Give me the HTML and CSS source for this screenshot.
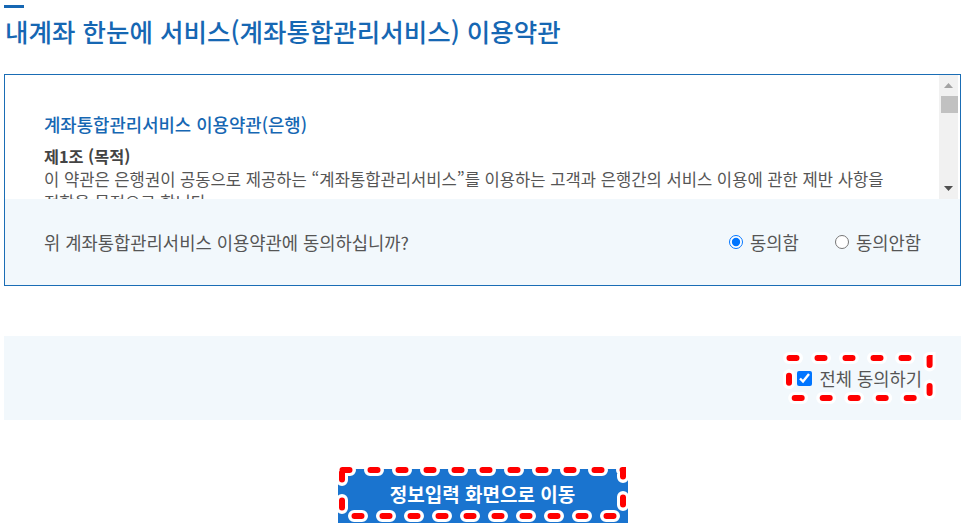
FILE: index.html
```html
<!DOCTYPE html>
<html lang="ko">
<head>
  <meta charset="UTF-8" />
  <meta name="viewport" content="width=device-width, initial-scale=1.0"/>
  <title>이용약관</title>
  <link rel="stylesheet" href="styles.css">
</head>
<body>

  <h1 class="page-title">내계좌 한눈에 서비스(계좌통합관리서비스) 이용약관</h1>

  <div class="terms-box">
    <div class="terms-view">
      <div class="terms-scroll">
        <h2 class="terms-title">계좌통합관리서비스 이용약관(은행)</h2>

        <h3 class="article">제1조 (목적)</h3>
        <p>이 약관은 은행권이 공동으로 제공하는 “계좌통합관리서비스”를 이용하는 고객과 은행간의 서비스 이용에 관한 제반 사항을 정함을 목적으로 합니다.</p>

        <h3 class="article">제2조 (정의)</h3>
        <p>① “계좌통합관리서비스”(이하 “서비스”라 합니다)란 고객이 은행권에 개설한 본인 명의의 계좌를 한 번에 조회하고, 비활동성 계좌의 해지 및 잔고이전을 할 수 있는 서비스를 말합니다.</p>
        <p>② “비활동성 계좌”란 최종 입출금일로부터 1년 이상 거래가 없는 계좌를 말합니다.</p>

        <h3 class="article">제3조 (서비스의 내용)</h3>
        <p>① 고객은 서비스를 통해 본인 명의 계좌의 개설 은행, 계좌번호, 잔액 등을 조회할 수 있습니다.</p>
        <p>② 고객은 잔액이 50만원 이하인 비활동성 계좌를 해지하고 잔고를 본인 명의의 다른 계좌로 이전할 수 있습니다.</p>

        <h3 class="article">제4조 (본인확인)</h3>
        <p>은행은 서비스 제공을 위하여 휴대폰 인증 및 공동인증서 등을 통해 고객 본인 여부를 확인합니다.</p>
      </div>

      <div class="scrollbar" aria-hidden="true">
        <span class="scroll-arrow">
          <svg width="9" height="5" viewBox="0 0 9 5"><path d="M4.5 0L9 5H0z" fill="#a3a3a3"/></svg>
        </span>
        <span class="scroll-track"><span class="scroll-thumb"></span></span>
        <span class="scroll-arrow">
          <svg width="9" height="5" viewBox="0 0 9 5"><path d="M0 0h9L4.5 5z" fill="#505050"/></svg>
        </span>
      </div>
    </div>

    <div class="agree-row">
      <span class="agree-question">위 계좌통합관리서비스 이용약관에 동의하십니까?</span>
      <div class="agree-options">
        <label class="option"><input type="radio" name="agree1" checked> 동의함</label>
        <label class="option"><input type="radio" name="agree1"> 동의안함</label>
      </div>
    </div>
  </div>

  <div class="all-agree">
    <label class="all-agree-label">
      <input type="checkbox" checked>
      전체 동의하기
      <svg class="mark" aria-hidden="true">
        <rect class="mark-halo" x="0" y="0" width="100%" height="100%"/>
        <rect class="mark-dash" x="0" y="0" width="100%" height="100%"/>
      </svg>
    </label>
  </div>

  <div class="actions">
    <button class="next-btn" type="button">
      정보입력 화면으로 이동
      <svg class="mark" aria-hidden="true">
        <rect class="mark-halo" x="0" y="0" width="100%" height="100%"/>
        <rect class="mark-dash" x="0" y="0" width="100%" height="100%"/>
      </svg>
    </button>
  </div>

</body>
</html>
```

FILE: styles.css
```css
body {
  font-family: "Noto Sans CJK KR", "Noto Sans", sans-serif;
  background: #ffffff;
  color: #555555;
  margin: 0;
  padding: 5px 4px 0;
}

.page-title {
  margin: 0 0 27px;
  padding-left: 1px;
  font-size: 25.5px;
  line-height: 32px;
  font-weight: 500;
  color: #1667b3;
}

.page-title::before {
  content: "";
  display: block;
  width: 20px;
  height: 3px;
  margin: 0 0 7px -1px;
  background: #1667b3;
}

/* terms box */
.terms-box {
  border: 1px solid #1a6db5;
  background: #ffffff;
}

.terms-view {
  display: flex;
  height: 124px;
  padding-right: 2px;
}

.terms-scroll {
  flex: 1;
  overflow-y: auto;
  padding: 37px 40px 30px 39px;
}

.scrollbar {
  display: flex;
  flex-direction: column;
  width: 19px;
  background: #f1f1f1;
}

.scroll-arrow {
  display: flex;
  align-items: center;
  justify-content: center;
  height: 21px;
}

.scroll-track {
  flex: 1;
  padding-left: 2px;
}

.scroll-thumb {
  display: block;
  height: 17px;
  background: #c1c1c1;
}

.terms-title {
  margin: 0;
  font-size: 17.8px;
  line-height: 24px;
  font-weight: 500;
  color: #1667b3;
}

.article {
  margin: 9px 0 0;
  font-size: 16.3px;
  line-height: 23px;
  font-weight: 700;
  color: #444444;
}

.terms-scroll p {
  margin: 0;
  font-size: 16.6px;
  line-height: 23px;
  color: #555555;
}

.agree-row {
  display: flex;
  align-items: center;
  justify-content: space-between;
  height: 86px;
  padding: 0 39px;
  background: #f2f8fc;
  font-size: 17.7px;
  color: #555555;
}

.agree-options {
  display: flex;
  gap: 36px;
}

.option {
  display: inline-flex;
  align-items: center;
  gap: 7px;
}

.option input {
  width: 14px;
  height: 14px;
  margin: 0;
}

/* all agree */
.all-agree {
  display: flex;
  justify-content: flex-end;
  align-items: center;
  height: 84px;
  margin-top: 50px;
  padding-right: 31px;
  background: #f2f8fc;
}

.all-agree-label {
  position: relative;
  display: inline-flex;
  align-items: center;
  gap: 7px;
  height: 40px;
  padding: 0 8px;
  font-size: 17.7px;
  color: #555555;
}

.all-agree-label input {
  width: 15px;
  height: 15px;
  margin: 0;
}

.actions {
  display: flex;
  justify-content: center;
  margin-top: 49px;
}

.next-btn {
  position: relative;
  width: 290px;
  padding: 13px 0 17px;
  border: none;
  background: #1a74cf;
  color: #ffffff;
  font-family: inherit;
  font-size: 19px;
  line-height: 24px;
  font-weight: 700;
  cursor: pointer;
}

.next-btn .mark {
  top: 1px;
  left: 4px;
  width: calc(100% - 9px);
  height: calc(100% - 8px);
}

/* focus highlight marks */
.mark {
  position: absolute;
  top: 0;
  left: 0;
  width: 100%;
  height: 100%;
  overflow: visible;
  pointer-events: none;
}

.mark rect {
  fill: none;
  stroke-linecap: round;
}

.mark-halo {
  stroke: #ffffff;
  stroke-width: 12;
  stroke-dasharray: 8 20;
}

.mark-dash {
  stroke: #ff0000;
  stroke-width: 6;
  stroke-dasharray: 7 21;
  stroke-dashoffset: -0.5;
}
```
